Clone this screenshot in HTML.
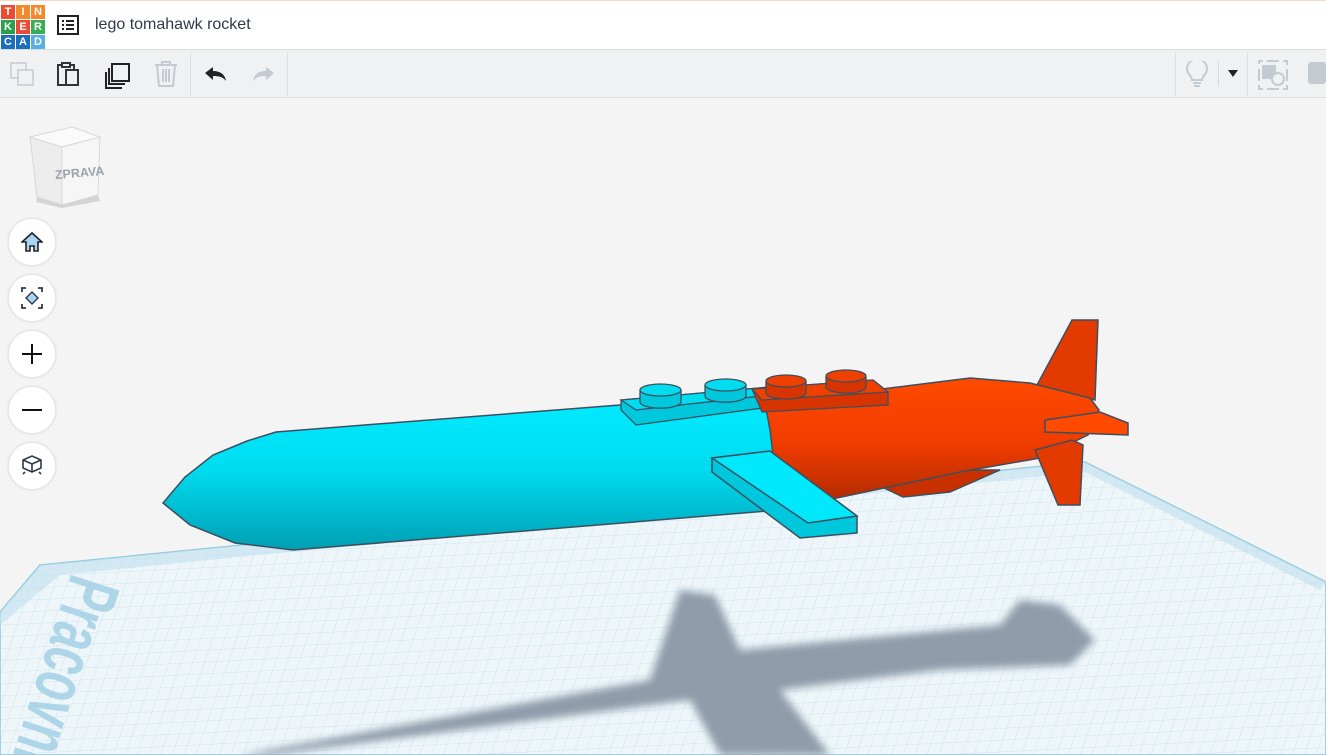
<!DOCTYPE html>
<html><head><meta charset="utf-8"><style>
*{margin:0;padding:0;box-sizing:border-box}
html,body{width:1326px;height:755px;overflow:hidden}
body{background:#f4f4f4;font-family:"Liberation Sans",sans-serif;position:relative}
.top{position:absolute;left:0;top:0;width:1326px;height:50px;background:#fff;border-top:1px solid #f6d8c8;border-bottom:1px solid #d9dde2}
.tb{position:absolute;left:0;top:50px;width:1326px;height:48px;background:#f0f1f3;border-bottom:1px solid #dcdfe3}
.logo{position:absolute;left:1px;top:4px;display:grid;grid-template-columns:repeat(3,14px);grid-gap:1px}
.logo div{width:14px;height:14px;color:#fff;font-weight:bold;font-size:11px;text-align:center;line-height:14px}
.title{position:absolute;left:95px;top:15px;font-size:16px;color:#2e3a48}
.btn{position:absolute;left:7px;width:50px;height:50px;border-radius:50%;background:#fff;border:2px solid #e6e8ea}
.btn svg{position:absolute;left:12px;top:12px}
.sep{position:absolute;width:1px;height:44px;background:#dcdfe3}
</style></head><body>
<svg style="position:absolute;left:0;top:0" width="1326" height="755">
<defs>
<pattern id="g" width="12" height="12" patternUnits="userSpaceOnUse" patternTransform="matrix(1,-0.05,-0.35,1,0,0)">
<rect width="12" height="12" fill="#eef6fa"/><path d="M0 0H12M0 0V12" stroke="#c3dfec" stroke-width="0.8"/></pattern>
<linearGradient id="cy" x1="0" y1="0" x2="0" y2="1"><stop offset="0" stop-color="#00eaff"/><stop offset=".45" stop-color="#00dcf0"/><stop offset="1" stop-color="#009fb4"/></linearGradient>
<linearGradient id="or" x1="0" y1="0" x2="0" y2="1"><stop offset="0" stop-color="#ff4a00"/><stop offset=".5" stop-color="#f03c00"/><stop offset="1" stop-color="#a82800"/></linearGradient>
<filter id="bl"><feGaussianBlur stdDeviation="4"/></filter>
<clipPath id="pc"><polygon points="40,565 1085,462 1326,582 1326,755 0,755 0,612"/></clipPath>
</defs>
<polygon points="40,565 1085,462 1326,582 1326,755 0,755 0,612" fill="url(#g)" stroke="#8cc6de" stroke-width="1.5"/>
<polygon points="40,565 1085,462 1326,582 1320,590 1085,472 60,575 0,625 0,612" fill="#bfe0ee" opacity=".6"/>
<g clip-path="url(#pc)">
<text x="0" y="0" transform="translate(72,572) rotate(108) scale(0.62,1)" font-size="74" font-weight="bold" fill="#9fcfe4" opacity=".8">Pracovní</text>
<g fill="#8a98a6" filter="url(#bl)" opacity=".95">
<path d="M680 590 L715 595 L740 650 L1000 625 L1020 600 L1060 605 L1095 640 L1070 665 L940 670 L780 690 L830 755 L720 755 L690 700 L270 755 L240 755 L650 680 Z"/>
</g>
</g>
<polygon points="1037,385 1072,320 1098,320 1095,400" fill="#e33a00" stroke="#3d4f5f" stroke-width="1.5"/>
<polygon points="878,485 900,478 960,470 1000,470 950,492 903,497" fill="#c83000" stroke="#3d4f5f" stroke-width="1.5"/>
<path d="M762,404 L970,378 L1030,383 L1090,398 L1099,410 L1088,435 L1040,458 L960,472 L780,510 Z" fill="url(#or)" stroke="#3d4f5f" stroke-width="1.5"/>
<polygon points="1035,450 1072,440 1083,445 1080,505 1058,505" fill="#e33a00" stroke="#3d4f5f" stroke-width="1.5"/>
<polygon points="1045,420 1100,412 1128,423 1128,435 1045,432" fill="#ff4a00" stroke="#3d4f5f" stroke-width="1.5"/>
<path d="M163,503 L185,477 L213,455 L247,441 L276,432 L620,405 L765,403 L770,430 L775,470 L780,510 L293,550 L235,543 L190,525 Z" fill="url(#cy)" stroke="#3d4f5f" stroke-width="1.5"/>
<polygon points="621,400 770,387 770,407 636,425 621,410" fill="#00c8dc" stroke="#3d4f5f" stroke-width="1.3"/>
<polygon points="621,400 770,387 770,395 636,410" fill="#00dcf0" stroke="#3d4f5f" stroke-width="1.3"/>
<polygon points="752,389 873,380 888,392 888,405 762,412" fill="#d83400" stroke="#3d4f5f" stroke-width="1.3"/>
<polygon points="752,389 873,380 888,392 762,400" fill="#f04000" stroke="#3d4f5f" stroke-width="1.3"/>
<g stroke="#3d4f5f" stroke-width="1.3">
<path d="M640 390v12a20 6 0 0 0 41 0v-12" fill="#00c8dc"/><ellipse cx="660.5" cy="390" rx="20.5" ry="6" fill="#00dcf0"/>
<path d="M705 385v11a20 6 0 0 0 41 0v-11" fill="#00c8dc"/><ellipse cx="725.5" cy="385" rx="20.5" ry="6" fill="#00dcf0"/>
<path d="M766 381v12a20 6 0 0 0 40 0v-12" fill="#d83400"/><ellipse cx="786" cy="381" rx="20" ry="6" fill="#ee4000"/>
<path d="M826 376v11a20 6 0 0 0 40 0v-11" fill="#d83400"/><ellipse cx="846" cy="376" rx="20" ry="6" fill="#ee4000"/>
</g>
<polygon points="712,458 770,451 857,516 857,533 800,538 712,472" fill="#00c8dc" stroke="#3d4f5f" stroke-width="1.5"/>
<polygon points="712,458 770,451 857,516 808,523" fill="#00e8fc" stroke="#3d4f5f" stroke-width="1.5"/>
</svg>
<div class="top">
<div class="logo">
<div style="background:#e94b35">T</div><div style="background:#f28a2c">I</div><div style="background:#f28a2c">N</div>
<div style="background:#2c9e4b">K</div><div style="background:#e94b35">E</div><div style="background:#3bad59">R</div>
<div style="background:#1d6eb8">C</div><div style="background:#1d6eb8">A</div><div style="background:#5aafe3">D</div>
</div>
<svg style="position:absolute;left:57px;top:14px" width="22" height="20"><rect x="1" y="1" width="20" height="18" fill="none" stroke="#222" stroke-width="2"/><path d="M5 6h2M9 6h8M5 10h2M9 10h8M5 14h2M9 14h8" stroke="#222" stroke-width="2"/></svg>
<div class="title">lego tomahawk rocket</div>
</div>
<div class="tb">
<svg style="position:absolute;left:10px;top:12px" width="26" height="26" fill="none" stroke="#c3cad2" stroke-width="1.5"><rect x="1" y="1" width="15" height="15"/><rect x="8" y="8" width="15" height="15" fill="#f0f1f3"/></svg>
<svg style="position:absolute;left:57px;top:10px" width="24" height="28" fill="none" stroke="#333" stroke-width="2"><path d="M5 5H1v20h10"/><path d="M5 3h8v4H5z"/><path d="M13 5h4v4"/><rect x="9" y="10" width="12" height="15"/></svg>
<svg style="position:absolute;left:104px;top:12px" width="28" height="28" fill="none" stroke="#222" stroke-width="2"><rect x="8" y="2" width="17" height="17"/><path d="M5 6v16h16M2 10v16h16"/></svg>
<svg style="position:absolute;left:154px;top:10px" width="24" height="28" fill="none" stroke="#c3cad2" stroke-width="2"><path d="M1 5h22M8 5V2h8v3M3 5l2 21h14l2-21M9 9v13M12 9v13M15 9v13"/></svg>
<div class="sep" style="left:190px;top:2px"></div>
<svg style="position:absolute;left:204px;top:16px" width="24" height="16"><path d="M1 7 9 1v4c7 0 12 3 13 10-3-4-7-5-13-5v4z" fill="#222"/></svg>
<svg style="position:absolute;left:251px;top:16px" width="24" height="16"><path d="M23 7 15 1v4C8 5 3 8 2 15c3-4 7-5 13-5v4z" fill="#c3cad2"/></svg>
<div class="sep" style="left:287px;top:2px"></div>
<div class="sep" style="left:1175px;top:2px"></div>
<svg style="position:absolute;left:1186px;top:11px" width="22" height="28" fill="none" stroke="#c3cad2" stroke-width="2"><path d="M6 19c0-4-5-6-5-11a10 10 0 0 1 20 0c0 5-5 7-5 11zM7 22h8M8 25h6"/></svg>
<div style="position:absolute;left:1218px;top:12px;width:1px;height:24px;background:#d6dade"></div>
<svg style="position:absolute;left:1228px;top:20px" width="10" height="7"><path d="M0 0h10L5 7z" fill="#222"/></svg>
<div class="sep" style="left:1247px;top:2px"></div>
<svg style="position:absolute;left:1258px;top:10px" width="30" height="30" fill="none" stroke="#c3cad2" stroke-width="2"><path d="M1 4V1h4M25 1h4v4M29 25v4h-4M5 29H1v-4M1 9v12M29 9v12M9 1h12M9 29h12"/><rect x="5" y="6" width="12" height="12" fill="#c3cad2"/><circle cx="20" cy="19" r="6" fill="#f0f1f3"/></svg>
<svg style="position:absolute;left:1308px;top:12px" width="18" height="26"><rect x="0" y="0" width="18" height="22" rx="3" fill="#c3cad2"/></svg>
</div>
<svg style="position:absolute;left:22px;top:125px" width="82" height="85">
<polygon points="8,12 50,2 78,12 40,22" fill="#fafafa" stroke="#d8d8d8"/>
<polygon points="8,12 40,22 40,80 15,72" fill="#ececec" stroke="#d8d8d8"/>
<polygon points="40,22 78,12 76,70 40,80" fill="#f6f6f6" stroke="#d8d8d8"/>
<polygon points="15,72 40,80 76,70 78,76 40,83 14,77" fill="#d4d4d4"/>
<text x="58" y="52" font-size="12.5" font-weight="bold" fill="#9da3aa" text-anchor="middle" transform="rotate(-5 58 52)">ZPRAVA</text>
</svg>
<div class="btn" style="top:217px"><svg width="22" height="22" fill="none" stroke="#222" stroke-width="1.6"><path d="M11 2 1 11h4v9h4v-5h4v5h4v-9h4z" fill="#a8d4f5"/></svg></div>
<div class="btn" style="top:273px"><svg width="22" height="22" fill="none" stroke="#2e3a48" stroke-width="1.8"><path d="M1 5V1h4M17 1h4v4M21 17v4h-4M5 21H1v-4"/><path d="M11 5l6 6-6 6-6-6z" fill="#a8d4f5" stroke-width="1.4"/></svg></div>
<div class="btn" style="top:329px"><svg width="22" height="22" stroke="#111" stroke-width="2"><path d="M11 1v20M1 11h20"/></svg></div>
<div class="btn" style="top:385px"><svg width="22" height="22" stroke="#111" stroke-width="2"><path d="M1 11h20"/></svg></div>
<div class="btn" style="top:441px"><svg width="22" height="22" fill="none" stroke="#2e3a48" stroke-width="1.6"><path d="M11 1 20 5v8l-9 4-9-4V5z"/><path d="M2 5l9 4 9-4M11 9v8M4 17l-2 2M18 17l2 2"/></svg></div>
</body></html>
